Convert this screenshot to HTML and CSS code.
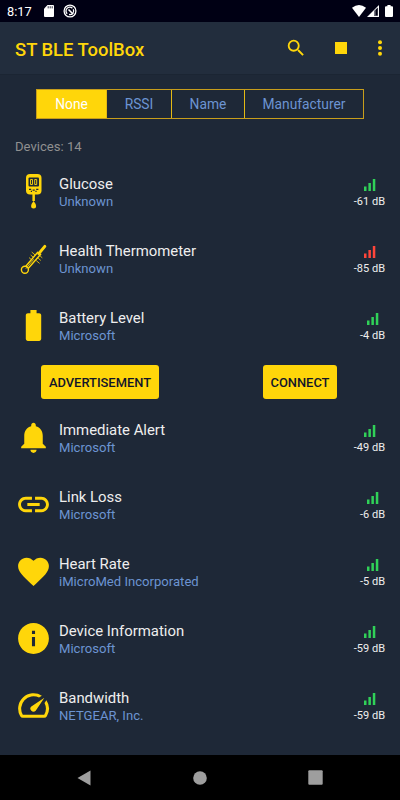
FILE: index.html
```html
<!DOCTYPE html>
<html lang="en">
<head>
    <meta charset="UTF-8">
    <meta name="viewport" content="width=device-width, initial-scale=1.0">
    <title>ST BLE ToolBox</title>
    <link rel="stylesheet" href="styles.css">
</head>
<body>

<div class="status-bar">
    <span class="clock">8:17</span>
    <svg class="sd-icon" width="10" height="12" viewBox="0 0 10 12"><path fill="#fff" d="M3.5 0H9q1 0 1 1v10q0 1-1 1H1q-1 0-1-1V3.8z"/><path stroke="#000014" stroke-width=".8" d="M4.2 1.2v2.2M6.2 1.2v2.2M8.2 1.2v2.2"/></svg>
    <svg class="sync-icon" width="14" height="14" viewBox="0 0 14 14" fill="none" stroke="#fff"><circle cx="7" cy="7" r="5.9" stroke-width="1.3"/><path stroke-width="1.3" d="M4.2 9.8A3.7 3.7 0 0 1 9.4 4.2M10.3 5.3A3.7 3.7 0 0 1 6 10.5"/><path stroke-width="1.6" d="M5.5 5.5l4.5 4.5"/></svg>
    <div class="status-right">
        <svg width="14" height="12" viewBox="0 0 14 12"><path fill="#fff" d="M0 2.7Q7-2.5 14 2.7L7 12z"/></svg>
        <svg width="12" height="12" viewBox="0 0 12 12"><path fill="#fff" d="M12 0v12H0z"/><path fill="#000014" d="M7 6.3l3.8-3.7v8.2H7z"/><path fill="#777783" d="M7 6.3l1.6-1.5v6H7z"/></svg>
        <svg class="phone-battery" width="8" height="12" viewBox="0 0 8 12"><path fill="#fff" d="M2.4 0h3.2v1.2H7q1 0 1 1V11q0 1-1 1H1q-1 0-1-1V2.2q0-1 1-1h1.4z"/></svg>
    </div>
</div>

<header class="app-bar">
    <h1>ST BLE ToolBox</h1>
    <svg class="search" width="22" height="22" viewBox="0 0 24 24"><path d="M15.5 14h-.79l-.28-.27A6.47 6.47 0 0 0 16 9.5 6.5 6.5 0 1 0 9.5 16c1.61 0 3.09-.59 4.23-1.57l.27.28v.79l5 4.99L20.49 19l-4.99-5zm-6 0C7.01 14 5 11.99 5 9.5S7.01 5 9.5 5 14 7.01 14 9.5 11.99 14 9.5 14z"/></svg>
    <div class="stop"></div>
    <svg class="more" width="6" height="16" viewBox="0 0 6 16"><circle cx="3" cy="2.2" r="2"/><circle cx="3" cy="8" r="2"/><circle cx="3" cy="13.8" r="2"/></svg>
</header>

<main>
    <div class="tabs">
        <div class="tab tab-none active">None</div>
        <div class="tab tab-rssi">RSSI</div>
        <div class="tab tab-name">Name</div>
        <div class="tab tab-manufacturer">Manufacturer</div>
    </div>

    <p class="count">Devices: 14</p>

    <div class="device">
        <svg class="icon" viewBox="0 0 37 37"><rect x="11" y="1" width="15.5" height="20.5" rx="4"/><rect class="screen" x="13.5" y="4.5" width="10.5" height="9" rx="1"/><path class="fine" d="M15.5 6.5h2v5h-2zM19.7 6.5h2v5h-2z"/><path class="cut" d="M14 16.3h2.2M17.6 17.2h2.2M21.2 16.3h2.2M15.8 18.3H17M20.4 18.3h1.2"/><path d="M17.4 21h2.5v7h-2.5zM18.6 28q2.5 3 2.5 5a2.5 2.5 0 0 1-5 0q0-2 2.5-5z"/></svg>
        <div class="info"><div class="name">Glucose</div><div class="maker">Unknown</div></div>
        <div class="signal"><svg viewBox="0 0 12 12"><path d="M0 7.5h2.5V12H0zM4.4 4h2.5v8H4.4zM8.8 0h2.5v12H8.8z"/></svg><span>-61 dB</span></div>
    </div>

    <div class="device">
        <svg class="icon" viewBox="0 0 37 37"><g class="line"><circle cx="9.9" cy="29.7" r="3.5"/><path d="M11 26L22.7 12.3M13.6 28L25.7 14.2"/><path class="thin" d="M11 28.5L18.5 19.6M14.3 17.8l1.6 1.4M16 15.3l2 1.7M17 12.3l2.8 2.4M21.5 20.8l2.8 2.4M23.5 18.5l2 1.7M25.4 16.2l1.6 1.4"/><path class="thick" d="M23.8 13.6L29.8 6.4"/></g></svg>
        <div class="info"><div class="name">Health Thermometer</div><div class="maker">Unknown</div></div>
        <div class="signal weak"><svg viewBox="0 0 12 12"><path d="M0 7.5h2.5V12H0zM4.4 4h2.5v8H4.4zM8.8 0h2.5v12H8.8z"/></svg><span>-85 dB</span></div>
    </div>

    <div class="device">
        <svg class="icon" viewBox="0 0 24 24"><path d="M15.67 4H14V2h-4v2H8.33C7.6 4 7 4.6 7 5.33v15.33C7 21.4 7.6 22 8.33 22h7.33c.74 0 1.34-.6 1.34-1.33V5.33C17 4.6 16.4 4 15.67 4z"/></svg>
        <div class="info"><div class="name">Battery Level</div><div class="maker">Microsoft</div></div>
        <div class="signal"><svg viewBox="0 0 12 12"><path d="M0 7.5h2.5V12H0zM4.4 4h2.5v8H4.4zM8.8 0h2.5v12H8.8z"/></svg><span>-4 dB</span></div>
    </div>

    <div class="actions">
        <button class="advertisement">ADVERTISEMENT</button>
        <button class="connect">CONNECT</button>
    </div>

    <div class="device">
        <svg class="icon" viewBox="0 0 24 24"><path d="M12 22c1.1 0 2-.9 2-2h-4c0 1.1.89 2 2 2zm6-6v-5c0-3.07-1.64-5.64-4.5-6.32V4c0-.83-.67-1.5-1.5-1.5s-1.5.67-1.5 1.5v.68C7.63 5.36 6 7.92 6 11v5l-2 2v1h16v-1l-2-2z"/></svg>
        <div class="info"><div class="name">Immediate Alert</div><div class="maker">Microsoft</div></div>
        <div class="signal"><svg viewBox="0 0 12 12"><path d="M0 7.5h2.5V12H0zM4.4 4h2.5v8H4.4zM8.8 0h2.5v12H8.8z"/></svg><span>-49 dB</span></div>
    </div>

    <div class="device">
        <svg class="icon" viewBox="0 0 24 24"><path d="M3.9 12c0-1.71 1.39-3.1 3.1-3.1h4V7H7c-2.76 0-5 2.24-5 5s2.24 5 5 5h4v-1.9H7c-1.71 0-3.1-1.39-3.1-3.1zM8 13h8v-2H8v2zm9-6h-4v1.9h4c1.71 0 3.1 1.39 3.1 3.1s-1.39 3.1-3.1 3.1h-4V17h4c2.76 0 5-2.24 5-5s-2.24-5-5-5z"/></svg>
        <div class="info"><div class="name">Link Loss</div><div class="maker">Microsoft</div></div>
        <div class="signal"><svg viewBox="0 0 12 12"><path d="M0 7.5h2.5V12H0zM4.4 4h2.5v8H4.4zM8.8 0h2.5v12H8.8z"/></svg><span>-6 dB</span></div>
    </div>

    <div class="device">
        <svg class="icon" viewBox="0 0 24 24"><path d="M12 21.35l-1.45-1.32C5.4 15.36 2 12.28 2 8.5 2 5.42 4.42 3 7.5 3c1.74 0 3.41.81 4.5 2.09C13.09 3.81 14.76 3 16.5 3 19.58 3 22 5.42 22 8.5c0 3.78-3.4 6.86-8.55 11.54L12 21.35z"/></svg>
        <div class="info"><div class="name">Heart Rate</div><div class="maker">iMicroMed Incorporated</div></div>
        <div class="signal"><svg viewBox="0 0 12 12"><path d="M0 7.5h2.5V12H0zM4.4 4h2.5v8H4.4zM8.8 0h2.5v12H8.8z"/></svg><span>-5 dB</span></div>
    </div>

    <div class="device">
        <svg class="icon" viewBox="0 0 24 24"><path d="M12 2C6.48 2 2 6.48 2 12s4.48 10 10 10 10-4.48 10-10S17.52 2 12 2zm1 15h-2v-6h2v6zm0-8h-2V7h2v2z"/></svg>
        <div class="info"><div class="name">Device Information</div><div class="maker">Microsoft</div></div>
        <div class="signal"><svg viewBox="0 0 12 12"><path d="M0 7.5h2.5V12H0zM4.4 4h2.5v8H4.4zM8.8 0h2.5v12H8.8z"/></svg><span>-59 dB</span></div>
    </div>

    <div class="device">
        <svg class="icon" viewBox="0 0 24 24"><path d="M20.38 8.57l-1.23 1.85a8 8 0 0 1-.22 7.58H5.07A8 8 0 0 1 15.58 6.85l1.85-1.23A10 10 0 0 0 3.35 19a2 2 0 0 0 1.72 1h13.85a2 2 0 0 0 1.74-1 10 10 0 0 0-.27-10.44zm-9.79 6.84a2 2 0 0 0 2.83 0l5.66-8.49-8.49 5.66a2 2 0 0 0 0 2.83z"/></svg>
        <div class="info"><div class="name">Bandwidth</div><div class="maker">NETGEAR, Inc.</div></div>
        <div class="signal"><svg viewBox="0 0 12 12"><path d="M0 7.5h2.5V12H0zM4.4 4h2.5v8H4.4zM8.8 0h2.5v12H8.8z"/></svg><span>-59 dB</span></div>
    </div>
</main>

<nav class="nav-bar">
    <svg width="14" height="16" viewBox="0 0 14 16"><path d="M13.5.5v15L.5 8z"/></svg>
    <svg width="14" height="14" viewBox="0 0 14 14"><circle cx="7" cy="7" r="6.8"/></svg>
    <svg width="15" height="15" viewBox="0 0 15 15"><rect x=".3" y=".3" width="14.4" height="14.4" rx="1"/></svg>
</nav>

</body>
</html>
```

FILE: styles.css
```css
* {
    box-sizing: border-box;
}

body {
    margin: 0;
    height: 800px;
    display: flex;
    flex-direction: column;
    overflow: hidden;
    background: #1e2837;
    color: #eee;
    font-family: Roboto, sans-serif;
}

svg {
    display: block;
    flex: none;
}

/* Status bar */
.status-bar {
    height: 22px;
    flex: none;
    display: flex;
    align-items: center;
    padding: 0 7px;
    background: #000014;
}

.clock {
    width: 37px;
    font-size: 12.8px;
    color: #fff;
}

.sync-icon {
    margin-left: 9px;
}

.status-right {
    display: flex;
    gap: 1px;
    margin-left: auto;
}

.phone-battery {
    margin-left: 5px;
}

/* App bar */
.app-bar {
    height: 52px;
    flex: none;
    display: flex;
    align-items: center;
    padding: 0 17px 0 15px;
    background: #222d3d;
    fill: #ffd60a;
}

.app-bar h1 {
    margin: 2px auto 0 0;
    font-size: 18.4px;
    font-weight: 500;
    color: #ffd60a;
}

.stop {
    width: 12px;
    height: 12px;
    margin: 0 30px 0 28px;
    background: #ffd60a;
}

/* Device list */
main {
    flex: 1;
    min-height: 0;
    border-top: 1px solid #1b2533;
}

.tabs {
    display: flex;
    width: 328px;
    height: 30px;
    margin: 14px 0 0 36px;
    border: 1px solid #c79d1b;
    font-size: 13.8px;
    color: #6c94d2;
}

.tab {
    display: flex;
    align-items: center;
    justify-content: center;
    border-left: 1px solid #e4b914;
}

.tab-none {
    width: 69px;
    border-left: 0;
}

.tab-rssi {
    width: 65px;
}

.tab-name {
    width: 73px;
}

.tab-manufacturer {
    flex: 1;
}

.active {
    background: #ffd60a;
    color: #fff;
}

.count {
    margin: 20px 0 3px 15px;
    font-size: 13.1px;
    line-height: 16px;
    color: #909090;
}

.device {
    display: flex;
    align-items: center;
    height: 67px;
    padding: 0 15px;
}

.icon {
    width: 37px;
    height: 37px;
    fill: #ffd60a;
}

.screen {
    fill: #1e2837;
}

.fine {
    fill: none;
    stroke: #ffd60a;
    stroke-width: .9;
}

.cut {
    fill: none;
    stroke: #1e2837;
    stroke-width: 1.2;
}

.line {
    fill: none;
    stroke: #ffd60a;
    stroke-width: 1.4;
    stroke-linecap: round;
}

.thin {
    stroke-width: .8;
}

.thick {
    stroke-width: 3;
}

.info {
    flex: 1;
    margin: 3px 0 0 7px;
}

.name {
    font-size: 14.9px;
    line-height: 18px;
}

.maker {
    font-size: 13.1px;
    line-height: 18px;
    color: #6c94d2;
}

.signal {
    display: flex;
    flex-direction: column;
    align-items: center;
    margin-top: 3px;
    font-size: 11px;
    line-height: 13px;
    fill: #30d158;
}

.signal svg {
    width: 12px;
    height: 12px;
    margin: 0 0 4px 2px;
}

.weak {
    fill: #ff453a;
}

.actions {
    display: flex;
    justify-content: space-between;
    height: 45px;
    padding: 6px 63px 5px 41px;
}

.actions button {
    padding: 0;
    border: 0;
    border-radius: 3px;
    background: #ffd60a;
    color: #11152a;
    font: 500 12.9px Roboto, sans-serif;
}

.advertisement {
    width: 118px;
}

.connect {
    width: 74px;
}

/* Navigation buttons */
.nav-bar {
    height: 45px;
    flex: none;
    display: flex;
    align-items: center;
    justify-content: space-between;
    padding: 0 77px;
    background: #000;
    fill: #9e9e9e;
}
```
